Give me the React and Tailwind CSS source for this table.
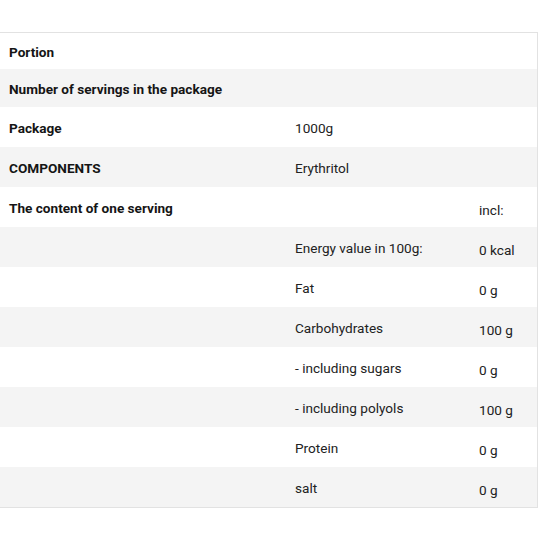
import React from "react";

const rows = [
  { label: "Portion", h: "h-[36px]" },
  { label: "Number of servings in the package", h: "h-[38px]" },
  { label: "Package", value: "1000g" },
  { label: "COMPONENTS", value: "Erythritol" },
  { label: "The content of one serving", extra: "incl:" },
  { value: "Energy value in 100g:", extra: "0 kcal" },
  { value: "Fat", extra: "0 g" },
  { value: "Carbohydrates", extra: "100 g" },
  { value: "- including sugars", extra: "0 g" },
  { value: "- including polyols", extra: "100 g" },
  { value: "Protein", extra: "0 g" },
  { value: "salt", extra: "0 g" },
];

export default function App() {
  return (
    <div className="w-[540px] h-[540px] bg-white pt-[32px] font-['Roboto',sans-serif]">
      <div className="w-[538px] border-t border-r border-b border-[#e2e2e2]">
        {rows.map((row, i) => (
          <div
            key={i}
            className={`flex items-center pt-[3px] ${row.h || "h-[40px]"} ${i % 2 === 1 ? "bg-[#f4f4f4]" : "bg-white"}`}
          >
            <div className="w-[286px] pl-[9px] text-[13.6px] font-bold text-[#151515]">
              {row.label}
            </div>
            <div className="w-[184px] pl-[9px] text-[13.6px] text-[#222]">
              {row.value}
            </div>
            <div className="flex-1 pl-[9px] pt-[3px] text-[13.6px] text-[#222]">
              {row.extra}
            </div>
          </div>
        ))}
      </div>
    </div>
  );
}
